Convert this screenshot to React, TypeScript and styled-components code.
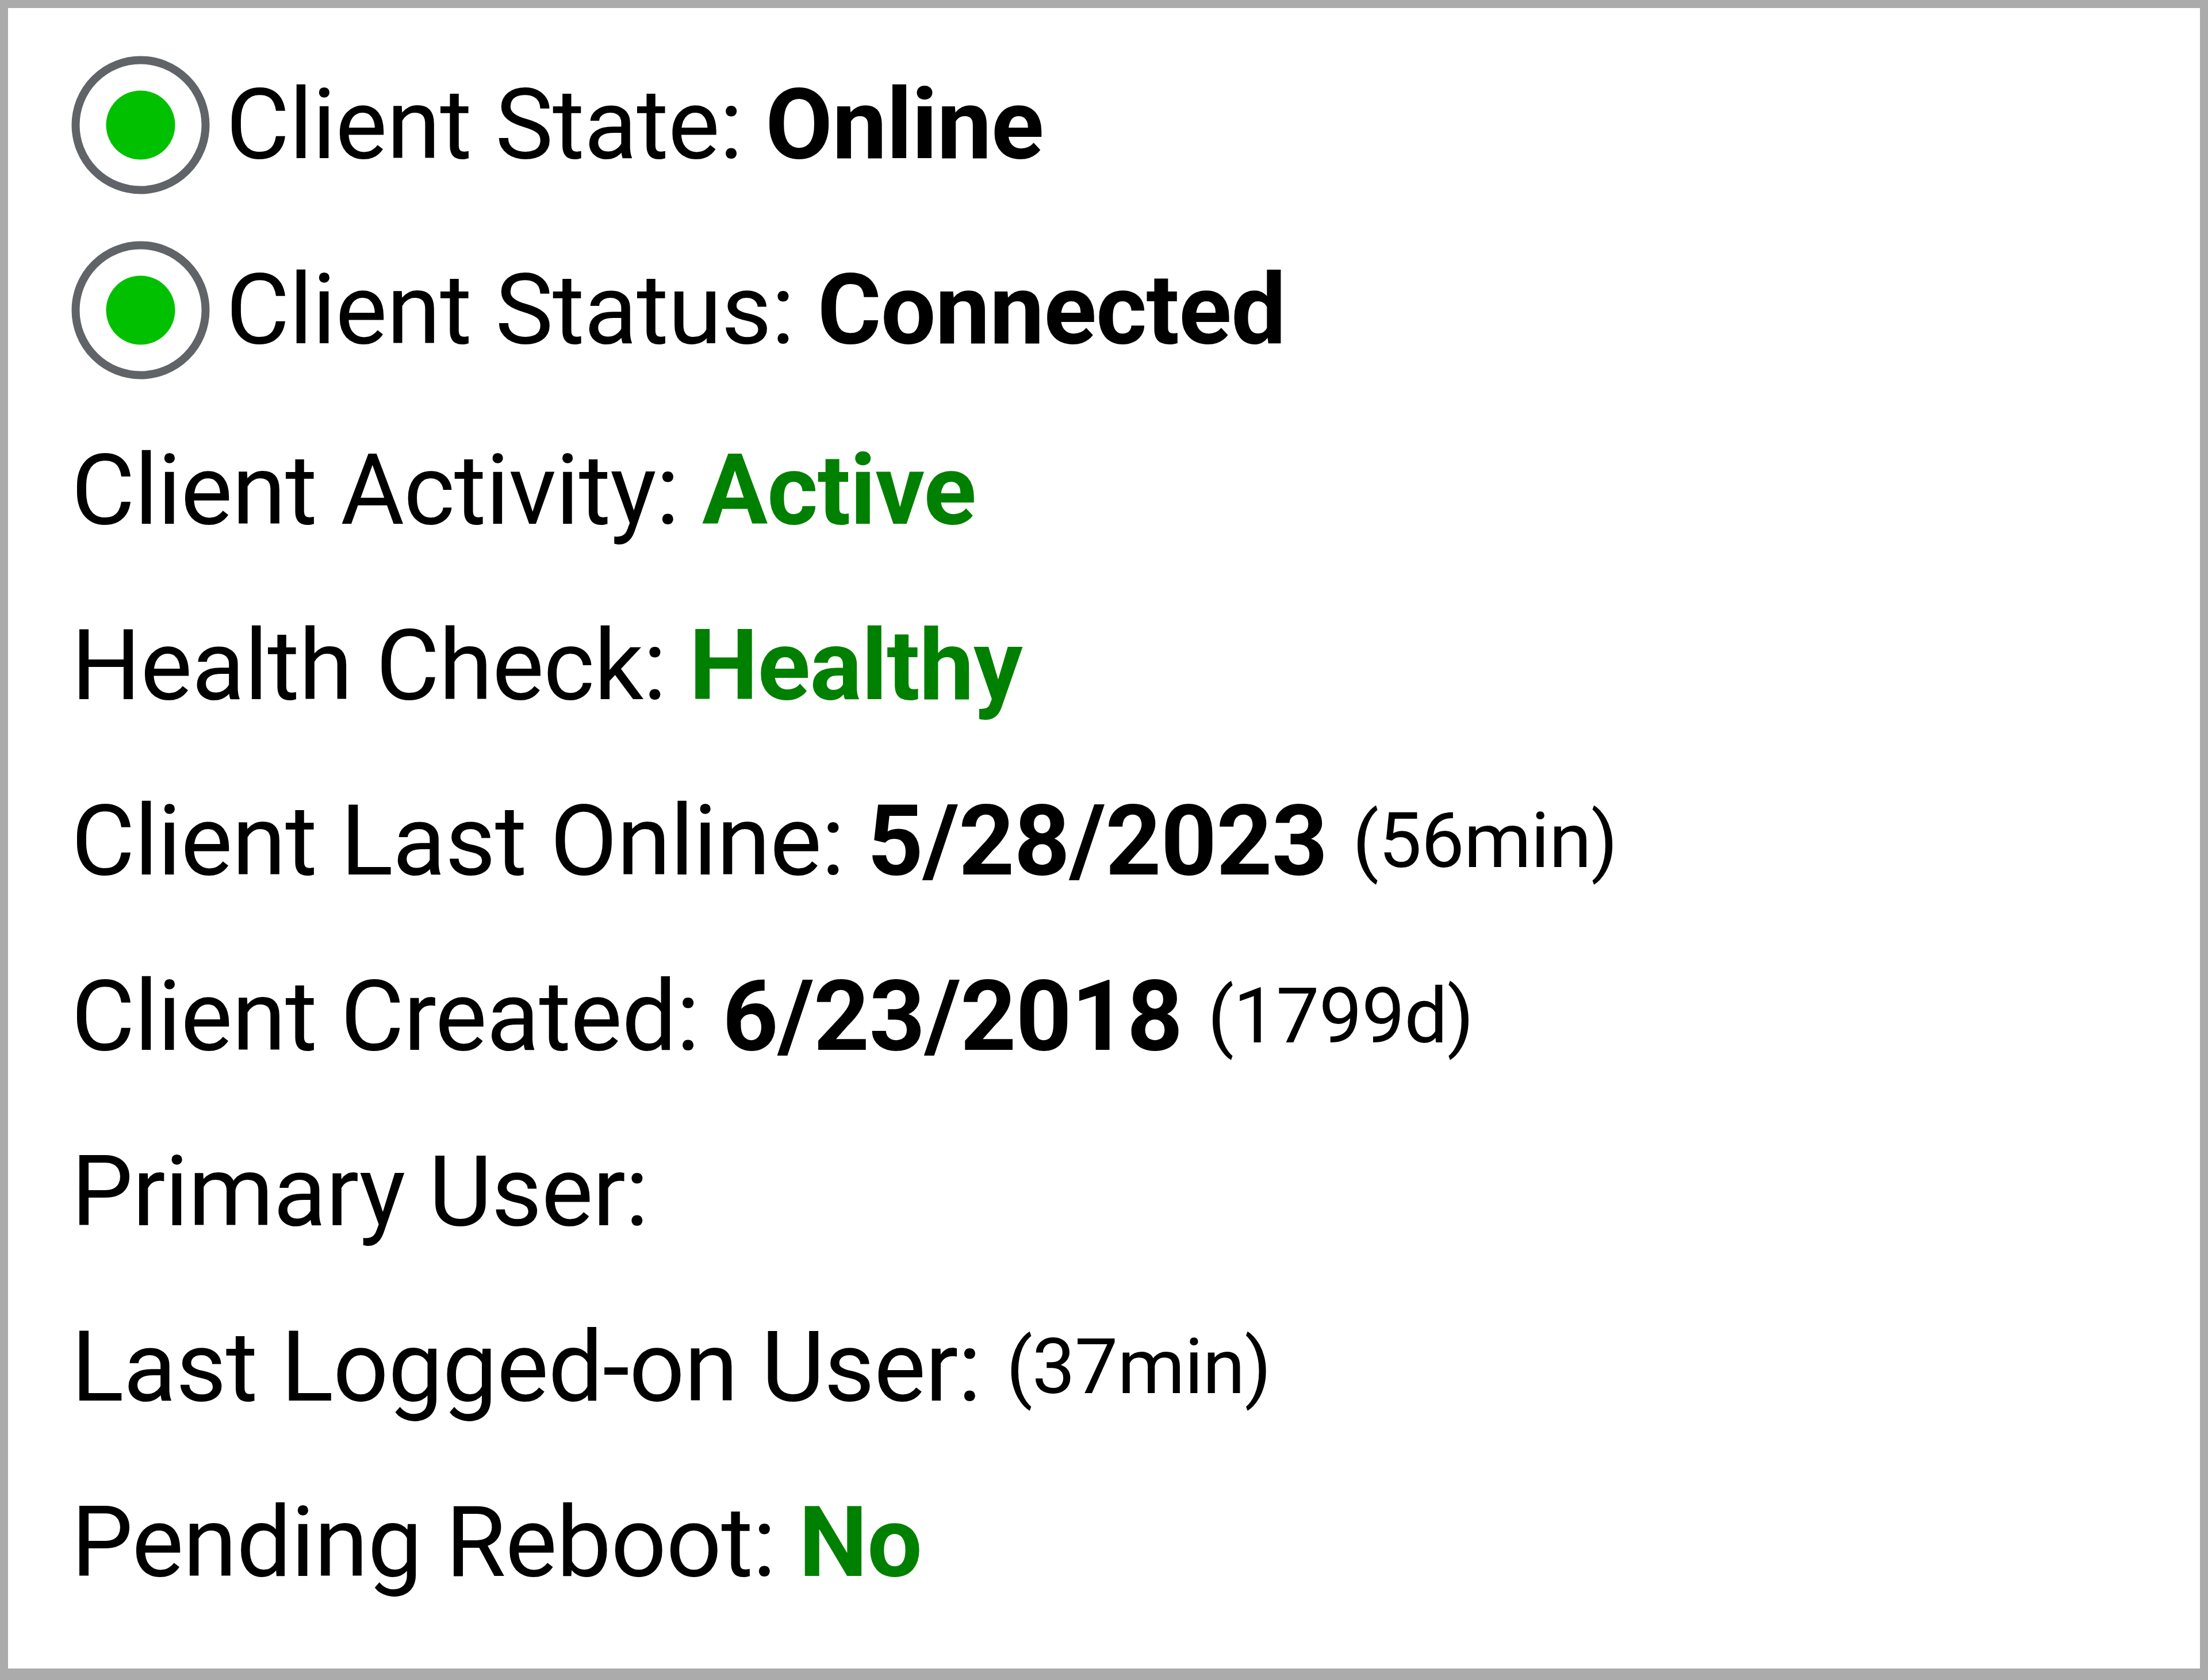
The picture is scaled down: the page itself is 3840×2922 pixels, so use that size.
import React from "react";
import styled, { createGlobalStyle } from "styled-components";

const GlobalStyle = createGlobalStyle`
  html, body {
    margin: 0;
    padding: 0;
    background: #ffffff;
  }
  body {
    font-family: Roboto, "Noto Sans", "Liberation Sans", sans-serif;
  }
`;

const Panel = styled.div`
  box-sizing: border-box;
  width: 3840px;
  height: 2922px;
  background: #ffffff;
  border-style: solid;
  border-color: #ababab;
  border-width: 14px 14px 20px 14px;
  padding: 42px 0 0 108px;
  display: flex;
  flex-direction: column;
`;

const Row = styled.div<{ $radio?: boolean }>`
  display: flex;
  align-items: center;
  height: ${(p) => (p.$radio ? "322px" : "305px")};
  padding-left: ${(p) => (p.$radio ? "0" : "2px")};
  font-size: 170px;
  line-height: 1;
  color: #000000;
  white-space: nowrap;
  letter-spacing: -1px;
`;

const RadioIcon = styled.svg`
  flex: none;
  width: 245px;
  height: 245px;
  margin-right: 26px;
`;

const Label = styled.span`
  font-weight: 400;
`;

const Value = styled.span<{ $tone?: "green" | "black" }>`
  margin-left: 40px;
  font-weight: 700;
  color: ${(p) => (p.$tone === "green" ? "#008000" : "#000000")};
`;

const Note = styled.span`
  margin-left: 44px;
  font-size: 134px;
  font-weight: 400;
  color: #000000;
`;

const Dot = () => (
  <RadioIcon viewBox="0 0 245 245">
    <circle cx="122.5" cy="122.5" r="113" fill="#ffffff" stroke="#606468" strokeWidth="14" />
    <circle cx="122.5" cy="122.5" r="60" fill="#00c000" />
  </RadioIcon>
);

type Item = {
  label: string;
  value?: string;
  tone?: "green" | "black";
  note?: string;
  radio?: boolean;
};

const items: Item[] = [
  { label: "Client State:", value: "Online", radio: true },
  { label: "Client Status:", value: "Connected", radio: true },
  { label: "Client Activity:", value: "Active", tone: "green" },
  { label: "Health Check:", value: "Healthy", tone: "green" },
  { label: "Client Last Online:", value: "5/28/2023", note: "(56min)" },
  { label: "Client Created:", value: "6/23/2018", note: "(1799d)" },
  { label: "Primary User:" },
  { label: "Last Logged-on User:", note: "(37min)" },
  { label: "Pending Reboot:", value: "No", tone: "green" },
];

export default function App() {
  return (
    <>
      <GlobalStyle />
      <Panel>
        {items.map((it) => (
          <Row key={it.label} $radio={it.radio}>
            {it.radio && <Dot />}
            <Label>{it.label}</Label>
            {it.value && <Value $tone={it.tone}>{it.value}</Value>}
            {it.note && <Note>{it.note}</Note>}
          </Row>
        ))}
      </Panel>
    </>
  );
}
